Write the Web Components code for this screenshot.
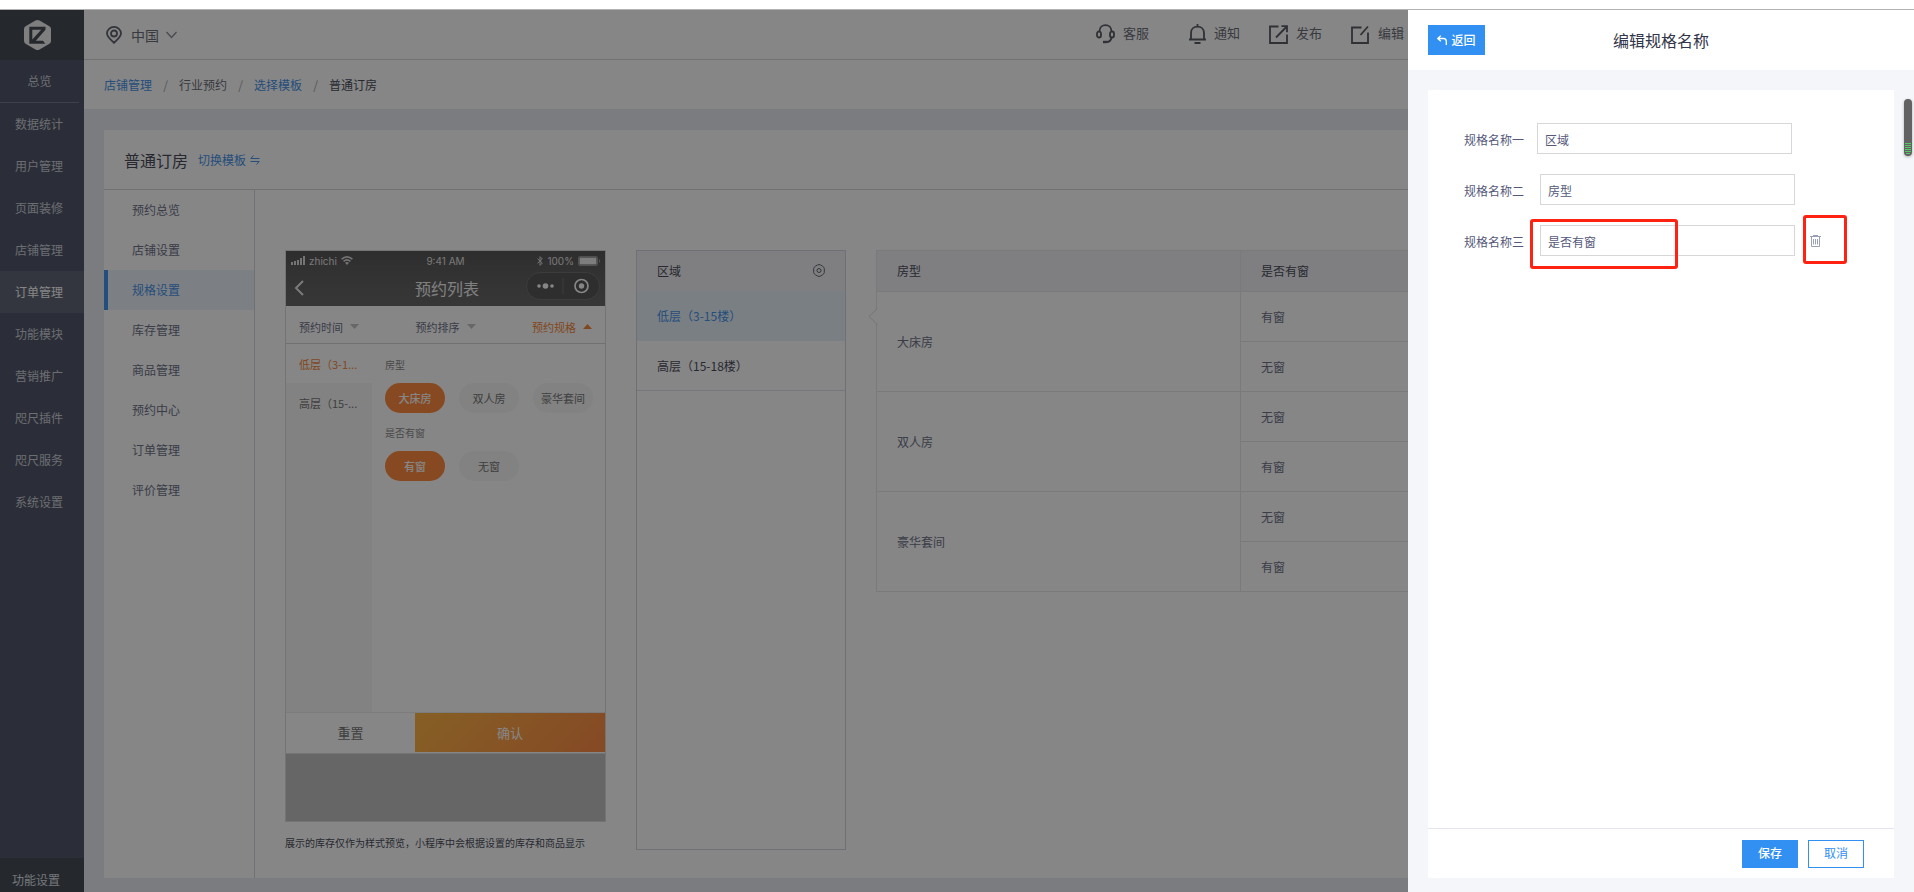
<!DOCTYPE html>
<html lang="zh-CN">
<head>
<meta charset="utf-8">
<meta name="viewport" content="width=device-width, initial-scale=1">
<title>编辑规格名称</title>
<style>
  :root {
    --blue: #3190f2;
    --link: #4694ea;
    --ink: #4c4f5c;
    --line: #d6d7da;
    --muted: #70738a;
    --drawer: 506px;
  }
  html, body { height: 100%; }
  body {
    margin: 0;
    background: #fff;
    color: var(--ink);
    font: 12px/20px "Noto Sans CJK SC", "Noto Sans", sans-serif;
  }
</style>
</head>
<body>
<app-shell>
  <side-nav slot="nav"></side-nav>
  <top-bar slot="top"></top-bar>
  <bread-crumb slot="crumb"></bread-crumb>
  <page-card>
    <span slot="title">普通订房</span>
    <sub-nav slot="menu"></sub-nav>
    <phone-preview></phone-preview>
    <region-list></region-list>
    <spec-table></spec-table>
  </page-card>
  <edit-drawer slot="drawer">
    <spec-field label="规格名称一" value="区域" first></spec-field>
    <spec-field label="规格名称二" value="房型"></spec-field>
    <spec-field label="规格名称三" value="是否有窗" removable></spec-field>
  </edit-drawer>
</app-shell>

<script>
const base = `
  :host, *, *::before, *::after { box-sizing: border-box; }
  a { color: inherit; text-decoration: none; }
  button, input { font: inherit; color: inherit; margin: 0; border-radius: 0; }
  button { border: 0; padding: 0; background: none; }
  ul { list-style: none; margin: 0; padding: 0; }
  svg { display: block; flex: none; }
`;

function define(name, css, html) {
  customElements.define(name, class extends HTMLElement {
    constructor() {
      super();
      const markup = typeof html === 'function' ? html(this) : html;
      this.attachShadow({ mode: 'open' }).innerHTML = `<style>${base}${css}</style>${markup}`;
    }
  });
}

define('app-shell', `
  :host { display: flex; flex-direction: column; min-height: 100vh; }
  .strip { height: 10px; flex: none; background: #fff; border-bottom: 1px solid #b2b2b2; }
  .app { position: relative; flex: 1; display: flex; background: #ebedf4; }
  .main { flex: 1; min-width: 0; display: flex; flex-direction: column; }
  .content { flex: 1; display: flex; padding: 21px 20px 14px; }
  ::slotted(page-card) { flex: 1; }
  .mask { position: absolute; inset: 0; background: rgba(0,0,0,.475); pointer-events: none; }
  .drawer { position: absolute; top: 0; right: 0; bottom: 0; width: var(--drawer); display: flex; }
  ::slotted(edit-drawer) { flex: 1; }
`, `
  <div class="strip"></div>
  <div class="app">
    <slot name="nav"></slot>
    <div class="main">
      <slot name="top"></slot>
      <slot name="crumb"></slot>
      <div class="content"><slot></slot></div>
    </div>
    <div class="mask"></div>
    <div class="drawer"><slot name="drawer"></slot></div>
  </div>
`);

define('side-nav', `
  :host { display: flex; flex-direction: column; width: 84px; flex: none; background: #52586b; color: #cdd0d8; }
  .logo { height: 50px; background: #484e58; padding: 10px 0 0 24px; }
  nav { flex: 1; display: flex; flex-direction: column; }
  nav a { line-height: 42px; padding-right: 6px; text-align: center; }
  .home { margin-right: 5px; padding-right: 0; border-bottom: 1px solid #777c8c; }
  .on { background: #636878; color: #fff; }
  .set { height: 34px; padding: 12px 0 0 12px; background: #484e58; color: #dfe1e6; }
`, `
  <a class="logo" href="#" aria-label="首页">
    <svg width="27" height="30" viewBox="0 0 27 30"><path d="M11.500.600q2-1.100 4 0l9.500 5.300q2 1.100 2 3.200v11.800q0 2.100-2 3.200l-9.500 5.300q-2 1.100-4 0L2 24.100q-2-1.100-2-3.200V9.100Q0 7 2 5.900z" fill="#f2f2f2"/><path d="M5.300 6.700H21.500V9.700L11.800 20.700H19L21.300 23.700H5.300zM8.300 9.700V19.500L17.200 9.700z" fill="#484e58" fill-rule="evenodd"/></svg>
  </a>
  <nav>
    <a class="home" href="#">总览</a>
    ${['数据统计','用户管理','页面装修','店铺管理','订单管理','功能模块','营销推广','咫尺插件','咫尺服务','系统设置']
      .map(t => `<a href="#"${t === '订单管理' ? ' class="on"' : ''}>${t}</a>`).join('')}
  </nav>
  <a class="set" href="#">功能设置</a>
`);

define('top-bar', `
  :host { display: flex; height: 50px; flex: none; align-items: center; background: #fff; border-bottom: 1px solid var(--line); padding: 0 calc(var(--drawer) + 4px) 0 22px; color: #6c6f7a; }
  .place { display: flex; align-items: center; gap: 9px; font-size: 14px; }
  .place .arrow { margin-left: -2px; }
  .acts { margin-left: auto; display: flex; gap: 29px; font-size: 13px; padding-bottom: 1px; }
  .acts button { display: flex; align-items: center; gap: 8px; }
  .acts button:first-child { margin-right: 11px; }
  .acts span { padding-bottom: 3px; }
`, `
  <button class="place">
    <svg width="16" height="18" viewBox="0 0 16 18" fill="none" stroke="#62656f" stroke-width="1.800"><path d="M8 16.800C5.500 14 1 11 1 7.500a7 6.600 0 0 1 14 0C15 11 10.500 14 8 16.800z"/><circle cx="8" cy="7.500" r="3"/></svg>
    <span>中国</span>
    <svg class="arrow" width="11" height="8" viewBox="0 0 11 8" fill="none" stroke="#8a8d96" stroke-width="1.300"><path d="M.5 1l5 5.500 5-5.500"/></svg>
  </button>
  <div class="acts">
    <button><svg width="19" height="20" viewBox="0 0 19 20" fill="none" stroke="#5a5d66" stroke-width="1.800"><path d="M3.500 7.500C3.500-1 15.500-1 15.500 7.500M15.500 13.500c-.5 3-2.500 4.500-5 4.500"/><path d="M7 18h4" stroke-width="2.400"/><rect x="1" y="7.500" width="4" height="6" rx="2"/><rect x="14" y="7.500" width="4" height="6" rx="2"/></svg><span>客服</span></button>
    <button><svg width="17" height="20" viewBox="0 0 17 20" fill="none" stroke="#5a5d66" stroke-width="1.800"><path d="M2 15V9C2 .5 15 .5 15 9v6M0 15.500h17M5.500 19h6M8.500 0v3"/></svg><span>通知</span></button>
    <button><svg width="19" height="19" viewBox="0 0 19 19" fill="none" stroke="#5a5d66" stroke-width="1.800"><path d="M9.500 1.500H1v16.500h17V9.500M12.500 1.200H18v6M17.800 1.500L7 12.500"/></svg><span>发布</span></button>
    <button><svg width="19" height="19" viewBox="0 0 19 19" fill="none" stroke="#5a5d66" stroke-width="1.800"><path d="M10.500 2.500H1V18h16V7.500M17 1.500L9.500 10"/></svg><span>编辑</span></button>
  </div>
`);

define('bread-crumb', `
  :host { display: block; background: #fff; flex: none; }
  nav { display: flex; height: 49px; align-items: center; padding: 0 20px; }
  a { color: var(--link); }
  i { width: 27px; text-align: center; color: #a4a6ad; font-style: normal; }
  .plain { color: #6c6f7a; }
`, `
  <nav aria-label="路径"><a href="#">店铺管理</a><i>/</i><a href="#" class="plain">行业预约</a><i>/</i><a href="#">选择模板</a><i>/</i><span>普通订房</span></nav>
`);

define('page-card', `
  :host { display: flex; flex-direction: column; background: #fff; min-width: 0; }
  header { display: flex; height: 60px; flex: none; align-items: center; gap: 10px; padding: 0 20px; border-bottom: 1px solid var(--line); }
  h1 { margin: 0; font-size: 16px; font-weight: 400; }
  a { display: flex; align-items: center; gap: 4px; color: var(--link); }
  .body { flex: 1; display: flex; min-width: 0; }
  .work { flex: 1; min-width: 0; display: flex; gap: 30px; padding: 60px 30px 28px; }
  ::slotted(spec-table) { flex: 1; }
`, `
  <header>
    <h1><slot name="title"></slot></h1>
    <a href="#">切换模板<svg width="10" height="10" viewBox="0 0 10 10" fill="none" stroke="#4694ea"><path d="M3.500.5L.8 3.500H9.500M.5 6.500h8.700L6.500 9.500"/></svg></a>
  </header>
  <div class="body"><slot name="menu"></slot><div class="work"><slot></slot></div></div>
`);

define('sub-nav', `
  :host { display: block; width: 151px; flex: none; border-right: 1px solid var(--line); color: var(--muted); }
  a { display: block; line-height: 40px; border-left: 4px solid transparent; padding-left: 24px; height: 40px; }
  .on { color: var(--link); background: #edf3fb; border-color: #4694ea; }
`, `<nav>${['预约总览','店铺设置','规格设置','库存管理','商品管理','预约中心','订单管理','评价管理']
  .map(t => `<a href="#"${t === '规格设置' ? ' class="on"' : ''}>${t}</a>`).join('')}</nav>`);

define('phone-preview', `
  :host { display: block; width: 321px; flex: none; }
  .phone { border: 1px solid #dcdcde; }
  .bar { background: linear-gradient(#585858, #6a6a6a); color: #f4f4f4; }
  .status, .title { display: grid; grid-template-columns: 1fr auto 1fr; align-items: center; }
  .status { height: 19px; padding: 0 5px; font: 10px/14px Inter, sans-serif; color: #e2e2e2; }
  .status div { display: flex; align-items: center; gap: 4px; }
  .status .r, .title .r { justify-content: flex-end; }
  .title { height: 36px; padding: 0 5px 0 8px; font-size: 16px; }
  .title .r { display: flex; padding-bottom: 4px; }
  .title strong { font-weight: 400; }
  .tabs { display: flex; justify-content: space-between; padding: 4px 13px 0; height: 37px; align-items: center; font-size: 11px; }
  .tabs button { display: flex; align-items: center; gap: 7px; color: var(--muted); }
  .tabs .on { color: #f58a3c; }
  .pick { display: flex; height: 370px; border-top: 1px solid var(--line); border-bottom: 1px solid #ececee; }
  .left { width: 86px; background: #f7f7f7; font-size: 11px; color: #777; }
  .left button { display: block; width: 100%; height: 39px; padding-left: 13px; text-align: left; white-space: nowrap; }
  .left .on { background: #fff; color: #f58a3c; }
  .right { flex: 1; padding: 14px 0 0 13px; }
  h3 { margin: 0 0 11px; font-weight: 400; font-size: 10px; line-height: 14px; color: #8c8c8c; }
  .pills { display: flex; gap: 14px; margin-bottom: 13px; font-size: 11px; color: #777; }
  .pills button { width: 60px; height: 30px; border-radius: 15px; background: #f8f8f8; }
  .pills .on { background: #ff8c40; color: #fff; font-weight: 500; }
  .foot { display: flex; height: 40px; font-size: 13px; padding-bottom: 1px; }
  .foot button { width: 129px; color: #777; }
  .foot .ok { flex: 1; background: linear-gradient(135deg, #ffb647, #ff8c47); color: #fff; }
  .rest { height: 68px; background: #c2c2c2; border-top: 1px solid #dcdcde; }
  p { margin: 14px 0 0; font-size: 10px; line-height: 14px; white-space: nowrap; }
`, `
  <div class="phone">
    <div class="bar">
      <div class="status">
        <div>
          <svg width="14" height="9" viewBox="0 0 14 9" fill="#ddd"><path d="M0 6h2v3H0zM3 5h2v4H3zM6 4h2v5H6zM9 2h2v7H9zM12 0h2v9h-2z"/></svg>
          <span>zhichi</span>
          <svg width="12" height="9" viewBox="0 0 12 9" fill="none" stroke="#ddd" stroke-width="1.600"><path d="M.6 3.200Q6-1.500 11.400 3.200M2.600 5.400Q6 2.500 9.400 5.400"/><path d="M4 6.700Q6 5.200 8 6.700L6 8.900z" fill="#ddd" stroke="none"/></svg>
        </div>
        <span>9:41 AM</span>
        <div class="r">
          <svg width="6" height="10" viewBox="0 0 6 10" fill="none" stroke="#ddd"><path d="M.5 2.700L5.300 7 3 9.300V.7L5.300 3 .5 7.300"/></svg>
          <span>100%</span>
          <svg width="22" height="10" viewBox="0 0 22 10"><rect x=".5" y=".5" width="19" height="9" rx="1.500" fill="none" stroke="#999"/><rect x="1.500" y="1.500" width="17" height="7" fill="#eee"/><rect x="21" y="3.500" width="1" height="3" fill="#999"/></svg>
        </div>
      </div>
      <div class="title">
        <svg width="10" height="16" viewBox="0 0 10 16" fill="none" stroke="#e8e8e8" stroke-width="2"><path d="M9 1L2 8l7 7"/></svg>
        <strong>预约列表</strong>
        <div class="r"><svg width="74" height="28" viewBox="0 0 74 28"><rect x=".5" y=".5" width="73" height="27" rx="13.500" fill="#585858" stroke="#737373"/><path d="M37 6v16" stroke="#737373"/><g fill="#fff"><circle cx="13" cy="14" r="1.800"/><circle cx="19.500" cy="14" r="2.800"/><circle cx="26" cy="14" r="1.800"/><circle cx="55.500" cy="14" r="2.700"/></g><circle cx="55.500" cy="14" r="6.500" fill="none" stroke="#fff" stroke-width="1.700"/></svg></div>
      </div>
    </div>
    <div class="tabs">
      <button>预约时间<svg width="9" height="5" viewBox="0 0 9 5"><path d="M0 0h9L4.500 5z" fill="#c4c4c8"/></svg></button>
      <button>预约排序<svg width="9" height="5" viewBox="0 0 9 5"><path d="M0 0h9L4.500 5z" fill="#c4c4c8"/></svg></button>
      <button class="on">预约规格<svg width="9" height="5" viewBox="0 0 9 5"><path d="M0 5h9L4.500 0z" fill="#f58a3c"/></svg></button>
    </div>
    <div class="pick">
      <div class="left"><button class="on">低层（3-1...</button><button>高层（15-...</button></div>
      <div class="right">
        <h3>房型</h3>
        <div class="pills"><button class="on">大床房</button><button>双人房</button><button>豪华套间</button></div>
        <h3>是否有窗</h3>
        <div class="pills"><button class="on">有窗</button><button>无窗</button></div>
      </div>
    </div>
    <div class="foot"><button>重置</button><button class="ok">确认</button></div>
    <div class="rest"></div>
  </div>
  <p>展示的库存仅作为样式预览，小程序中会根据设置的库存和商品显示</p>
`);

define('region-list', `
  :host { display: block; width: 210px; flex: none; border: 1px solid #d3d4de; }
  header { display: flex; justify-content: space-between; align-items: center; height: 40px; padding: 0 20px; background: #f1f2f6; }
  header button { padding-bottom: 2px; }
  li { border-bottom: 1px solid #dfe0e8; height: 50px; }
  li button { width: 100%; height: 49px; padding: 0 20px; text-align: left; }
  .on { border-color: transparent; background: #e9f1fa; color: var(--link); }
`, `
  <header><span>区域</span><button aria-label="设置"><svg width="12" height="13" viewBox="0 0 12 13" fill="none" stroke="#62656f"><path d="M4.500 1Q6 .1 7.500 1l2 1.200Q11 3 11.300 4.500v4Q11 10 9.500 10.800l-2 1.200Q6 12.900 4.500 12l-2-1.200Q1 10 .7 8.500v-4Q1 3 2.500 2.200z"/><circle cx="6" cy="6.500" r="2"/></svg></button></header>
  <ul><li class="on"><button>低层（3-15楼）</button></li><li><button>高层（15-18楼）</button></li></ul>
`);

define('spec-table', `
  :host { display: block; position: relative; min-width: 0; color: var(--muted); }
  table { width: 100%; border-collapse: collapse; table-layout: fixed; }
  col:first-child { width: 364px; }
  th, td { border: 1px solid #e9e9ec; height: 50px; padding: 0 20px; text-align: left; font-weight: 400; }
  th { height: 41px; background: #f1f2f6; color: var(--ink); }
  .notch { position: absolute; left: -8px; top: 58px; }
`, `
  <table>
    <colgroup><col><col></colgroup>
    <thead><tr><th>房型</th><th>是否有窗</th></tr></thead>
    <tbody>
      <tr><td rowspan="2">大床房</td><td>有窗</td></tr><tr><td>无窗</td></tr>
      <tr><td rowspan="2">双人房</td><td>无窗</td></tr><tr><td>有窗</td></tr>
      <tr><td rowspan="2">豪华套间</td><td>无窗</td></tr><tr><td>有窗</td></tr>
    </tbody>
  </table>
  <svg class="notch" width="10" height="17" viewBox="0 0 10 17" fill="#fff" stroke="#dcdce0"><path d="M9.500.5L1 8.500l8.500 8"/></svg>
`);

define('edit-drawer', `
  :host { display: flex; flex-direction: column; background: #f5f6fa; position: relative; }
  header { display: grid; grid-template-columns: 1fr auto 1fr; align-items: center; height: 60px; flex: none; padding: 0 20px; background: #fff; }
  h2 { margin: 0; font-size: 16px; font-weight: 400; line-height: 24px; color: #33364a; }
  .back { justify-self: start; display: flex; align-items: center; justify-content: center; gap: 4px; width: 57px; height: 30px; background: var(--blue); color: #fff; font-weight: 500; }
  form { flex: 1; display: flex; flex-direction: column; margin: 20px 20px 14px; background: #fff; }
  .fields { flex: 1; display: flex; flex-direction: column; gap: 20px; padding: 33px 36px; }
  footer { display: flex; justify-content: flex-end; align-items: center; gap: 10px; height: 50px; padding: 0 30px; border-top: 1px solid #e4e5f0; }
  footer button { width: 56px; height: 28px; border: 1px solid var(--blue); color: var(--blue); line-height: 24px; padding-bottom: 2px; }
  footer .save { background: var(--blue); color: #fff; font-weight: 500; }
  .thumb { position: absolute; right: 2px; top: 89px; width: 8px; height: 57px; border-radius: 4px; background: #626262; box-shadow: 0 1px 3px rgba(0,0,0,.3); overflow: hidden; }
  .thumb svg { position: absolute; left: 1px; bottom: 1px; }
`, `
  <header>
    <button class="back"><svg width="10" height="10" viewBox="0 0 10 10" fill="none" stroke="#fff" stroke-width="1.300"><path d="M3.800.6L.8 3.500l3 2.700M1 3.500h5.500Q9.300 3.500 9.300 6.500V10"/></svg>返回</button>
    <h2>编辑规格名称</h2>
  </header>
  <form>
    <div class="fields"><slot></slot></div>
    <footer><button type="button" class="save">保存</button><button type="button">取消</button></footer>
  </form>
  <div class="thumb"><svg width="6" height="12" viewBox="0 0 6 12" stroke="#52c966"><path d="M0 .5h6M0 2.500h6M0 4.500h6M0 6.500h6M0 8.500h6M1 10.500h4"/></svg></div>
`);

define('spec-field', `
  :host { display: flex; align-items: center; color: #55587a; position: relative; }
  label { width: 60px; margin-right: 16px; padding-top: 2px; }
  :host([first]) label { margin-right: 13px; }
  input { width: 255px; height: 31px; border: 1px solid #d6d7d9; padding: 1px 7px 0; background: #fff; outline: 0; }
  .del { margin: 0 0 0 15px; }
  .ring { position: absolute; border: 3px solid #ff2213; border-radius: 3px; pointer-events: none; }
  .name { left: 66px; top: -6px; width: 148px; height: 50px; }
  .trash { left: 339px; top: -10px; width: 44px; height: 49px; }
`, el => `
  <label for="f">${el.getAttribute('label')}</label>
  <input id="f" type="text" value="${el.getAttribute('value')}">
  ${el.hasAttribute('removable') ? `
  <button type="button" class="del" aria-label="删除"><svg width="11" height="12" viewBox="0 0 11 12" fill="none" stroke="#9aa0b5"><path d="M0 1.500h11M3 .5h5M1.500 2v9.500h8V2M3.500 4v5.500M5.500 4v5.500M7.500 4v5.500"/></svg></button>
  <span class="ring name"></span><span class="ring trash"></span>` : ''}
`);
</script>
</body>
</html>
